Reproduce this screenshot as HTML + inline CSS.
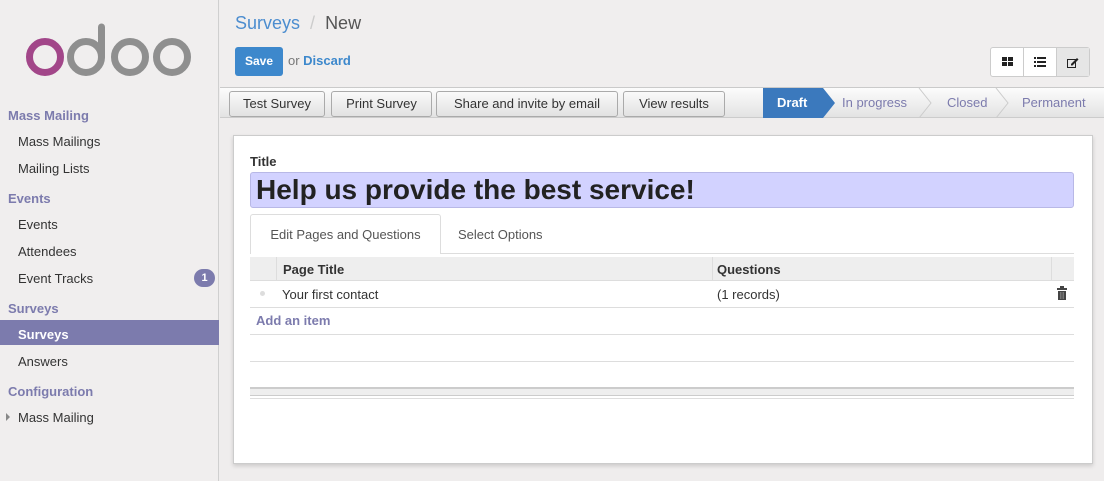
<!DOCTYPE html>
<html><head><style>
*{box-sizing:border-box;margin:0;padding:0}
body{width:1104px;height:481px;overflow:hidden;font-family:"Liberation Sans",sans-serif;font-size:13px;color:#333;background:#efeded;position:relative}
.abs{position:absolute}
#side{left:0;top:0;width:219px;height:481px;background:#f0eeee;border-right:1px solid #cfcfcf}
.h{position:absolute;left:8px;font-weight:bold;color:#7c7bad;font-size:13px}
.i{position:absolute;left:18px;color:#333;font-size:13px}
.btn{position:absolute;top:91px;height:26px;border:1px solid #aaa;border-radius:3px;background:linear-gradient(#fafafa,#e2e2e2);font-size:13px;color:#333;text-align:center;line-height:24px}
.st{position:absolute;top:88px;height:30px;line-height:30px;color:#7c7bad;font-size:13px}
</style></head><body>
<div id="side" class="abs">
<svg class="abs" style="left:0;top:0" width="219" height="90">
<circle cx="45" cy="57" r="15.5" fill="none" stroke="#a24689" stroke-width="7"/>
<circle cx="86" cy="57" r="15.5" fill="none" stroke="#8f8f8f" stroke-width="7"/>
<line x1="101.5" y1="27" x2="101.5" y2="57" stroke="#8f8f8f" stroke-width="7" stroke-linecap="round"/>
<circle cx="130" cy="57" r="15.5" fill="none" stroke="#8f8f8f" stroke-width="7"/>
<circle cx="172" cy="57" r="15.5" fill="none" stroke="#8f8f8f" stroke-width="7"/>
</svg>
<div class="h" style="top:108px">Mass Mailing</div>
<div class="i" style="top:134px">Mass Mailings</div>
<div class="i" style="top:161px">Mailing Lists</div>
<div class="h" style="top:191px">Events</div>
<div class="i" style="top:217px">Events</div>
<div class="i" style="top:244px">Attendees</div>
<div class="i" style="top:271px">Event Tracks</div>
<div class="abs" style="left:194px;top:269px;width:21px;height:18px;border-radius:9px;background:#7c7bad;color:#fff;font-size:11px;font-weight:bold;text-align:center;line-height:18px">1</div>
<div class="h" style="top:301px">Surveys</div>
<div class="abs" style="left:0;top:320px;width:219px;height:25px;background:#7c7bad"></div>
<div class="i" style="top:327px;color:#fff;font-weight:bold">Surveys</div>
<div class="i" style="top:354px">Answers</div>
<div class="h" style="top:384px">Configuration</div>
<div class="abs" style="left:6px;top:413px;width:0;height:0;border-left:4px solid #888;border-top:4px solid transparent;border-bottom:4px solid transparent"></div>
<div class="i" style="top:410px">Mass Mailing</div>
</div>
<div class="abs" style="left:220px;top:0;width:884px;height:88px;background:#f0eeee;border-bottom:1px solid #cacaca"></div>
<div class="abs" style="left:235px;top:13px;font-size:18px;color:#4c8dcf">Surveys <span style="color:#ccc">&nbsp;/&nbsp;</span> <span style="color:#555">New</span></div>
<div class="abs" style="left:235px;top:47px;width:48px;height:29px;background:#3d88cc;border-radius:3px;color:#fff;font-weight:bold;font-size:12px;text-align:center;line-height:29px">Save</div>
<div class="abs" style="left:288px;top:53px;color:#777">or <b style="color:#3d88cc">Discard</b></div>
<div class="abs" style="left:990px;top:47px;width:100px;height:30px;border:1px solid #ccc;border-radius:3px;background:#fff;display:flex">
<div style="width:33px;border-right:1px solid #ccc;display:flex;align-items:center;justify-content:center"><svg width="11" height="10"><rect x="0" y="0" width="5" height="4" fill="#222"/><rect x="6" y="0" width="5" height="4" fill="#222"/><rect x="0" y="5" width="5" height="4" fill="#222"/><rect x="6" y="5" width="5" height="4" fill="#222"/></svg></div>
<div style="width:33px;border-right:1px solid #ccc;display:flex;align-items:center;justify-content:center"><svg width="12" height="10"><g fill="#222"><rect x="0" y="0" width="2" height="2"/><rect x="3" y="0" width="9" height="2"/><rect x="0" y="4" width="2" height="2"/><rect x="3" y="4" width="9" height="2"/><rect x="0" y="8" width="2" height="2"/><rect x="3" y="8" width="9" height="2"/></g></svg></div>
<div style="flex:1;background:#e6e6e6;display:flex;align-items:center;justify-content:center"><svg width="12" height="11"><rect x="0.5" y="2.5" width="8" height="8" fill="none" stroke="#222"/><path d="M4 7 L10 1 L11.5 2.5 L5.5 8.5 L4 8.5Z" fill="#222"/></svg></div>
</div>
<div class="abs" style="left:220px;top:88px;width:884px;height:30px;background:linear-gradient(#fcfcfc,#e3e3e3);border-bottom:1px solid #ccc"></div>
<div class="btn" style="left:229px;width:96px">Test Survey</div>
<div class="btn" style="left:331px;width:101px">Print Survey</div>
<div class="btn" style="left:436px;width:182px">Share and invite by email</div>
<div class="btn" style="left:623px;width:102px">View results</div>
<svg class="abs" style="left:763px;top:88px" width="341" height="30"><path d="M0 0H60L72 15L60 30H0Z" fill="#3b79bd"/><path d="M156 0L168 15L156 30M233 0L245 15L233 30" fill="none" stroke="#ccc"/></svg>
<div class="st" style="left:777px;color:#fff;font-weight:bold">Draft</div>
<div class="st" style="left:842px">In progress</div>
<div class="st" style="left:947px">Closed</div>
<div class="st" style="left:1022px">Permanent</div>
<div class="abs" style="left:233px;top:135px;width:860px;height:329px;background:#fff;border:1px solid #ccc;box-shadow:0 2px 4px rgba(0,0,0,.15)"></div>
<div class="abs" style="left:250px;top:154px;font-weight:bold;font-size:13px">Title</div>
<div class="abs" style="left:250px;top:172px;width:824px;height:36px;background:#d2d2ff;border:1px solid #b8b8e6;border-radius:3px;font-size:28px;font-weight:bold;color:#222;padding-left:5px;line-height:34px;white-space:nowrap">Help us provide the best service!</div>
<div class="abs" style="left:250px;top:253px;width:824px;height:1px;background:#ddd"></div>
<div class="abs" style="left:250px;top:214px;width:191px;height:40px;background:#fff;border:1px solid #ddd;border-bottom:none;border-radius:3px 3px 0 0;color:#555;text-align:center;line-height:40px">Edit Pages and Questions</div>
<div class="abs" style="left:458px;top:227px;color:#555">Select Options</div>
<div class="abs" style="left:250px;top:257px;width:824px;height:24px;background:#eee;border-bottom:1px solid #ddd"></div>
<div class="abs" style="left:276px;top:257px;width:1px;height:24px;background:#ddd"></div>
<div class="abs" style="left:712px;top:257px;width:1px;height:24px;background:#ddd"></div>
<div class="abs" style="left:1051px;top:257px;width:1px;height:24px;background:#ddd"></div>
<div class="abs" style="left:283px;top:262px;font-weight:bold">Page Title</div>
<div class="abs" style="left:717px;top:262px;font-weight:bold">Questions</div>
<div class="abs" style="left:260px;top:291px;width:5px;height:5px;border-radius:50%;background:#ddd"></div>
<div class="abs" style="left:282px;top:287px">Your first contact</div>
<div class="abs" style="left:717px;top:287px">(1 records)</div>
<svg class="abs" style="left:1057px;top:286px" width="10" height="14"><rect x="3" y="0" width="4" height="2" fill="#444"/><rect x="0" y="2" width="10" height="2" fill="#444"/><rect x="1" y="5" width="8" height="9" fill="#444"/><path d="M3.5 6V13M5 6V13M6.5 6V13" stroke="#999" stroke-width=".6"/></svg>
<div class="abs" style="left:250px;top:307px;width:824px;height:1px;background:#ddd"></div>
<div class="abs" style="left:256px;top:313px;color:#7c7bad;font-weight:bold">Add an item</div>
<div class="abs" style="left:250px;top:334px;width:824px;height:1px;background:#ddd"></div>
<div class="abs" style="left:250px;top:361px;width:824px;height:1px;background:#ddd"></div>
<div class="abs" style="left:250px;top:387px;width:824px;height:9px;background:#eee;border-top:2px solid #ccc;border-bottom:1px solid #ccc"></div>
<div class="abs" style="left:250px;top:398px;width:824px;height:1px;background:#ddd"></div>
</body></html>
